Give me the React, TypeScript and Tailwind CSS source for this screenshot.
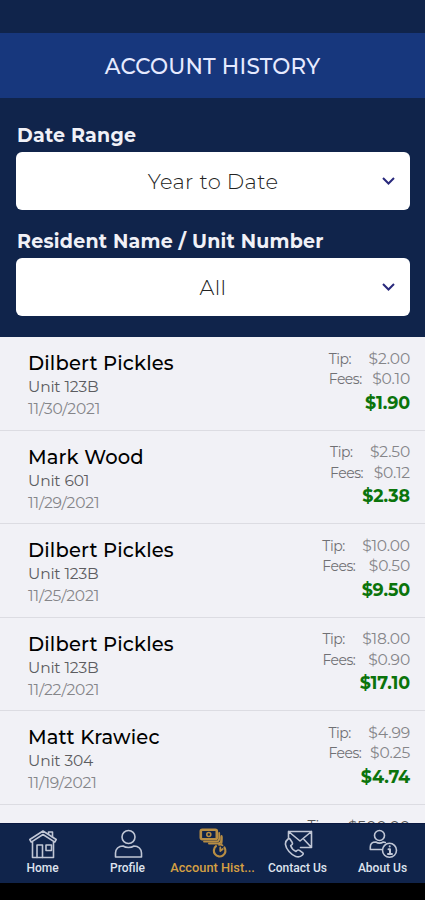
import type { ReactNode } from "react";
import { clsx } from "clsx";

interface Payment {
  name: string;
  unit: string;
  date: string;
  tip: string;
  fees: string;
  total: string;
}

const payments: Payment[] = [
  { name: "Dilbert Pickles", unit: "Unit 123B", date: "11/30/2021", tip: "$2.00", fees: "$0.10", total: "$1.90" },
  { name: "Mark Wood", unit: "Unit 601", date: "11/29/2021", tip: "$2.50", fees: "$0.12", total: "$2.38" },
  { name: "Dilbert Pickles", unit: "Unit 123B", date: "11/25/2021", tip: "$10.00", fees: "$0.50", total: "$9.50" },
  { name: "Dilbert Pickles", unit: "Unit 123B", date: "11/22/2021", tip: "$18.00", fees: "$0.90", total: "$17.10" },
  { name: "Matt Krawiec", unit: "Unit 304", date: "11/19/2021", tip: "$4.99", fees: "$0.25", total: "$4.74" },
];

export default function App() {
  return (
    <div className="flex h-[900px] w-[425px] flex-col overflow-hidden bg-black font-['Montserrat',Inter,sans-serif]">
      <div className="h-[33px] shrink-0 bg-[#10244b]" />
      <header className="flex h-[65px] shrink-0 items-center justify-center bg-[#17377d] pt-[3px]">
        <h1 className="text-[21.5px] leading-none font-medium tracking-[0.2px] text-[#e6eaff]">ACCOUNT HISTORY</h1>
      </header>

      <section className="flex h-[239px] shrink-0 flex-col gap-[18px] bg-[#10244b] px-4 pt-[24px]">
        <SelectField label="Date Range" value="Year to Date" />
        <SelectField label="Resident Name / Unit Number" value="All" />
      </section>

      <main className="min-h-0 flex-1 overflow-hidden bg-[#f1f1f6]">
        {payments.map((payment) => (
          <PaymentRow key={payment.date} payment={payment} />
        ))}
        <div className="flex justify-end gap-[16px] pt-[11px] pr-[15px] leading-[21px] text-[#555]">
          <span className="text-[14px]">Tip:</span>
          <span className="text-[15.5px]">$500.00</span>
        </div>
      </main>

      <nav className="flex h-[60px] shrink-0 border-t border-[#0a1840] bg-[#10244b] font-[Roboto,sans-serif]">
        <NavItem label="Home" icon={<HomeIcon />} />
        <NavItem label="Profile" icon={<ProfileIcon />} />
        <NavItem label="Account Hist..." icon={<HistoryIcon />} active />
        <NavItem label="Contact Us" icon={<ContactIcon />} />
        <NavItem label="About Us" icon={<AboutIcon />} />
      </nav>
      <div className="h-[17px] shrink-0 bg-black" />
    </div>
  );
}

function SelectField({ label, value }: { label: string; value: string }) {
  return (
    <div>
      <div className="h-[30px] pt-[2px] pl-px text-[19px] leading-6 font-bold tracking-[0.25px] text-[#f0f1f7]">{label}</div>
      <button className="relative flex h-[58px] w-[394px] items-center justify-center rounded-md bg-white text-[21px] font-light tracking-[0.35px] text-[#222]">
        <span className="pt-[2px]">{value}</span>
        <svg className="absolute top-[23.5px] right-[15px]" width="13" height="10" viewBox="0 0 13 10" fill="none">
          <path d="M1 2l5.500 5.500L12 2" stroke="#29297c" strokeWidth="2" />
        </svg>
      </button>
    </div>
  );
}

function PaymentRow({ payment }: { payment: Payment }) {
  return (
    <div className="flex h-[93.6px] justify-between border-b border-[#dcdce2] pr-[15px] pl-7">
      <div className="pt-[13px]">
        <div className="text-[19.5px] leading-[26px] font-medium tracking-[0.15px] text-black">{payment.name}</div>
        <div className="text-[15.5px] leading-[21px] tracking-[-0.15px] text-[#5c5c60]">{payment.unit}</div>
        <div className="text-[15.5px] leading-[23.5px] tracking-[-0.15px] text-[#858589]">{payment.date}</div>
      </div>
      <div className="flex flex-col items-end pt-[11.5px]">
        <div className="grid grid-cols-[auto_auto] gap-x-[7px] text-[15.5px] leading-[20.5px] text-[#858589]">
          <span className="text-[14px] tracking-[-0.5px] text-[#707074]">Tip:</span>
          <span className="text-right tracking-[-0.15px]">{payment.tip}</span>
          <span className="text-[14px] tracking-[-0.5px] text-[#707074]">Fees:</span>
          <span className="text-right tracking-[-0.15px]">{payment.fees}</span>
        </div>
        <div className="pt-px text-[17.5px] leading-[24px] font-bold tracking-[-0.1px] text-[#0b740b]">{payment.total}</div>
      </div>
    </div>
  );
}

function NavItem({ label, icon, active }: { label: string; icon: ReactNode; active?: boolean }) {
  return (
    <div className={clsx("flex w-[85px] flex-col items-center gap-px pt-[4px]", active ? "text-[#d5a043]" : "text-[#dfe3ee]")}>
      {icon}
      <span className={clsx("leading-[14px] font-medium whitespace-nowrap", active ? "text-[12.8px]" : "text-[12px]")}>
        {label}
      </span>
    </div>
  );
}

function Icon({ children }: { children: ReactNode }) {
  return (
    <svg
      width="32"
      height="32"
      viewBox="0 0 32 32"
      fill="none"
      stroke="currentColor"
      strokeWidth="1.6"
      strokeLinejoin="round"
      strokeLinecap="round"
      className="opacity-85"
    >
      {children}
    </svg>
  );
}

function HomeIcon() {
  return (
    <Icon>
      <path d="M5.500 14v15.500h21V14" />
      <path d="M16 3L2.800 11.500l1.400 2.600L16 6.500l11.800 7.600 1.400-2.600z" />
      <path d="M21.500 6V4h4v5M10 29.500V17h5.500v12.500M19 17h5.500v5.500H19z" />
    </Icon>
  );
}

function ProfileIcon() {
  return (
    <Icon>
      <circle cx="16.500" cy="9" r="6.500" />
      <path d="M3.500 29v-4c0-4 3-7 7.500-7 3 2 8 2 11 0 4.500 0 7.500 3 7.500 7v4z" />
    </Icon>
  );
}

function HistoryIcon() {
  return (
    <Icon>
      <rect x="3.800" y="1.800" width="16" height="9.500" rx="1.500" strokeWidth="2.600" />
      <circle cx="11.800" cy="6.500" r="2" />
      <path d="M7 13.600h12q3.200 0 3.200-3.200V5" strokeWidth="1.800" />
      <path d="M12 15.600h8.500q4 0 4-4V8" strokeWidth="2" />
      <path d="M24.500 9v6" strokeWidth="2" />
      <path d="M19 18.200a5.800 5.800 0 1 0 8.500 1.300" strokeWidth="2.200" />
      <path d="M22 16.800a6 6 0 0 1 3.500.4M23.300 19.500v3.500l2.500-2" strokeWidth="1.800" />
    </Icon>
  );
}

function ContactIcon() {
  return (
    <Icon>
      <path d="M6.500 9.500V3.500h23v16H18.500M6.500 3.500L18 13 29.500 3.500M29.500 19.500l-7.500-8" />
      <path d="M6 11c-4 3-3 8 1 12.500s9.500 7.500 13.500 3.500c1-1 1-1.500 0-2.300l-3-2.300c-1-.7-1.700-.6-2.500.1l-1 1c-2.500-1.200-4.500-3.500-5.300-5.800l1.200-1c.8-.7.7-1.500.2-2.400l-2-3c-.6-.9-1.300-.9-2.100-.3z" />
    </Icon>
  );
}

function AboutIcon() {
  return (
    <Icon>
      <circle cx="12.500" cy="7.500" r="5" />
      <path d="M14.500 21.500H3.300v-2.500c0-3 2-5 5.500-5 2.500 1.500 5 1.500 7.500 0l2 .5" />
      <circle cx="22.500" cy="22.300" r="7" />
      <path d="M21.500 21.300h1.500v4.700m-2 0h4M22.700 18.300v.1" strokeWidth="2" />
    </Icon>
  );
}
